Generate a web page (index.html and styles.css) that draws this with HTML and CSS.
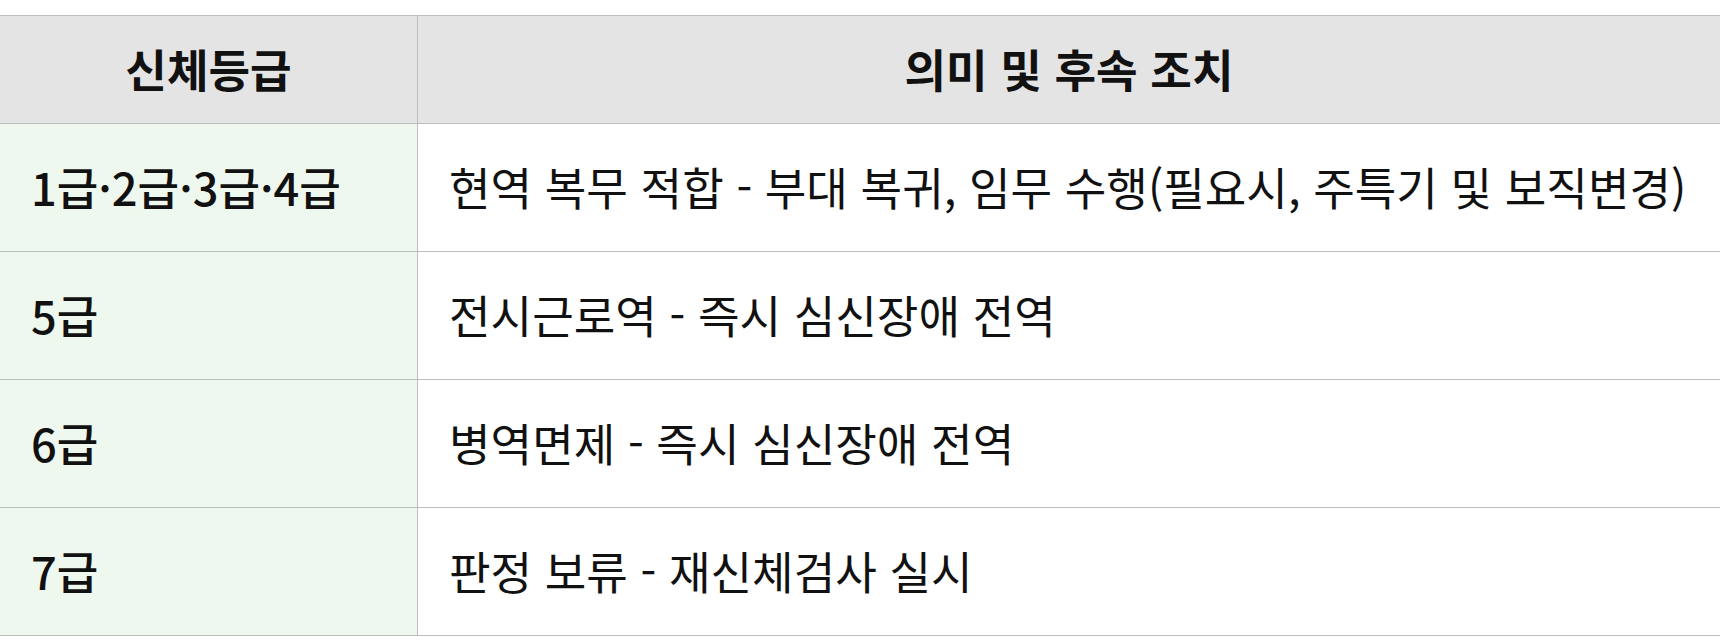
FILE: index.html
```html
<!DOCTYPE html>
<html lang="ko">
<head>
<meta charset="utf-8">
<link rel="stylesheet" href="styles.css">
</head>
<body>
<table class="grade-table">
  <thead>
    <tr>
      <th class="col-grade">신체등급</th>
      <th class="col-desc">의미 및 후속 조치</th>
    </tr>
  </thead>
  <tbody>
    <tr>
      <td class="grade">1급·2급·3급·4급</td>
      <td class="desc">현역 복무 적합 - 부대 복귀, 임무 수행(필요시, 주특기 및 보직변경)</td>
    </tr>
    <tr>
      <td class="grade">5급</td>
      <td class="desc">전시근로역 - 즉시 심신장애 전역</td>
    </tr>
    <tr>
      <td class="grade">6급</td>
      <td class="desc">병역면제 - 즉시 심신장애 전역</td>
    </tr>
    <tr>
      <td class="grade">7급</td>
      <td class="desc">판정 보류 - 재신체검사 실시</td>
    </tr>
  </tbody>
</table>
</body>
</html>
```

FILE: styles.css
```css
html, body {
  margin: 0;
  padding: 0;
  background: #ffffff;
}
body {
  padding-top: 15px;
  font-family: "Noto Sans CJK KR", "Noto Sans", sans-serif;
  color: #111111;
}
.grade-table {
  width: 100%;
  border-collapse: collapse;
  table-layout: fixed;
}
.grade-table th,
.grade-table td {
  border-top: 1px solid #bdbdbd;
  border-bottom: 1px solid #bdbdbd;
  font-size: 45.2px;
  line-height: 1.2;
}
.grade-table th + th,
.grade-table td + td {
  border-left: 1px solid #bdbdbd;
}
.col-grade {
  width: 417px;
}
.grade-table th {
  background: #e4e4e4;
  font-weight: 700;
  text-align: center;
  height: 107px;
  padding: 0;
}
.grade-table td {
  height: 127px;
  padding: 0 0 0 31px;
  text-align: left;
  white-space: nowrap;
}
.grade {
  background: #eff8ee;
  font-weight: 500;
}
.desc {
  background: #ffffff;
  font-weight: 400;
}
```
